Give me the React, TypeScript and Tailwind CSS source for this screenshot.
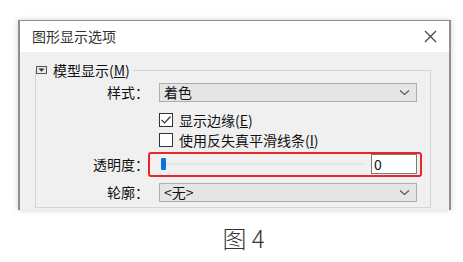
import React from "react";

const font = { fontFamily: '"Noto Sans CJK SC", "Noto Sans", sans-serif' };

function Chevron() {
  return (
    <svg width="11" height="7" viewBox="0 0 11 7" className="shrink-0">
      <path d="M1 1.5 L5.5 5.5 L10 1.5" fill="none" stroke="#555" strokeWidth="1.1" />
    </svg>
  );
}

function Select({ value }: { value: string }) {
  return (
    <div className="h-[19px] w-[258px] border border-[#adadad] bg-[#e5e5e5] flex items-center justify-between pl-[4px] pr-[6px]">
      <span className="text-[14px] leading-[17px] text-[#111]">{value}</span>
      <Chevron />
    </div>
  );
}

function Checkbox({ checked }: { checked: boolean }) {
  return (
    <div className="w-[14px] h-[14px] border border-[#333] bg-white flex items-center justify-center shrink-0">
      {checked && (
        <svg width="12" height="12" viewBox="0 0 12 12">
          <path d="M1.5 6 L4.6 9 L10.5 2.5" fill="none" stroke="#333" strokeWidth="1.2" />
        </svg>
      )}
    </div>
  );
}

function Label({ children }: { children: React.ReactNode }) {
  return (
    <div className="text-right text-[14px] leading-[17px] text-[#111]">{children}</div>
  );
}

export default function App() {
  return (
    <div className="w-[463px] h-[262px] bg-white overflow-hidden" style={font}>
      <div className="pt-[20px] pl-[18px]">
        <div className="w-[433px] h-[190px] border border-b-0 border-l-2 border-r-2 border-[#8f8f8f] shadow-[0_0_6px_rgba(0,0,0,0.18)] overflow-hidden flex flex-col">
          <div className="h-[31px] bg-white flex items-center justify-between pl-[12px] pr-[12px] shrink-0">
            <span className="text-[14px] leading-[17px] text-[#333]">图形显示选项</span>
            <svg width="13" height="13" viewBox="0 0 13 13">
              <path d="M1 1 L12 12 M12 1 L1 12" stroke="#444" strokeWidth="1.2" />
            </svg>
          </div>
          <div className="flex-1 bg-[#f0f0f0] pt-[10px] pl-[15px]">
            <fieldset className="w-[396px] border border-[#d4d4d4] pb-[5px]">
              <legend className="flex items-center pr-[3px] h-[16px]">
                <svg width="11" height="8" viewBox="0 0 11 8" className="mr-[6px]">
                  <rect x="0.5" y="0.5" width="10" height="7" fill="#e8e8e8" stroke="#555" />
                  <path d="M2.5 2.5 L8.5 2.5 L5.5 5.8 Z" fill="#333" />
                </svg>
                <span className="text-[14px] leading-[16px] text-[#111]">
                  模型显示(<u>M</u>)
                </span>
              </legend>
              <div className="grid grid-cols-[113px_258px] gap-x-[10px] pr-[13px] pt-[5px] items-center">
                <Label>样式：</Label>
                <Select value="着色" />

                <div className="mt-[8px]" />
                <div className="mt-[8px] h-[20px] flex items-center gap-[6px]">
                  <Checkbox checked />
                  <span className="text-[14px] leading-[17px] text-[#111]">
                    显示边缘(<u>E</u>)
                  </span>
                </div>

                <div />
                <div className="h-[20px] flex items-center gap-[6px]">
                  <Checkbox checked={false} />
                  <span className="text-[14px] leading-[17px] text-[#111]">
                    使用反失真平滑线条(<u>I</u>)
                  </span>
                </div>

                <div className="mt-[4px]">
                  <Label>透明度：</Label>
                </div>
                <div className="mt-[4px] relative h-[20px] flex items-center">
                  <div className="absolute left-[-11px] right-[-5px] top-[-2px] bottom-[-3px] border-2 border-[#e8262a] rounded-[3px]" />
                  <div className="w-[203px] flex items-center relative h-[12px] ml-[2px]">
                    <div className="absolute left-[3px] right-0 top-[5px] h-[2px] bg-[#dedede] border-y border-[#e6e6e6]" />
                    <div className="relative w-[5px] h-[12px] bg-[#0a74d8] rounded-[1px]" />
                  </div>
                  <div className="ml-[7px] w-[46px] h-[20px] bg-white border border-[#7a7a7a] flex items-center pl-[2px]">
                    <span className="text-[14px] leading-[17px] text-[#111]">0</span>
                  </div>
                </div>

                <div className="mt-[9px]">
                  <Label>轮廓：</Label>
                </div>
                <div className="mt-[9px]">
                  <Select value="<无>" />
                </div>
              </div>
            </fieldset>
          </div>
        </div>
      </div>
      <div className="mt-[14px] flex justify-center pl-[24px]">
        <span className="text-[24px] leading-[28px] font-light text-[#333]">图 4</span>
      </div>
    </div>
  );
}
